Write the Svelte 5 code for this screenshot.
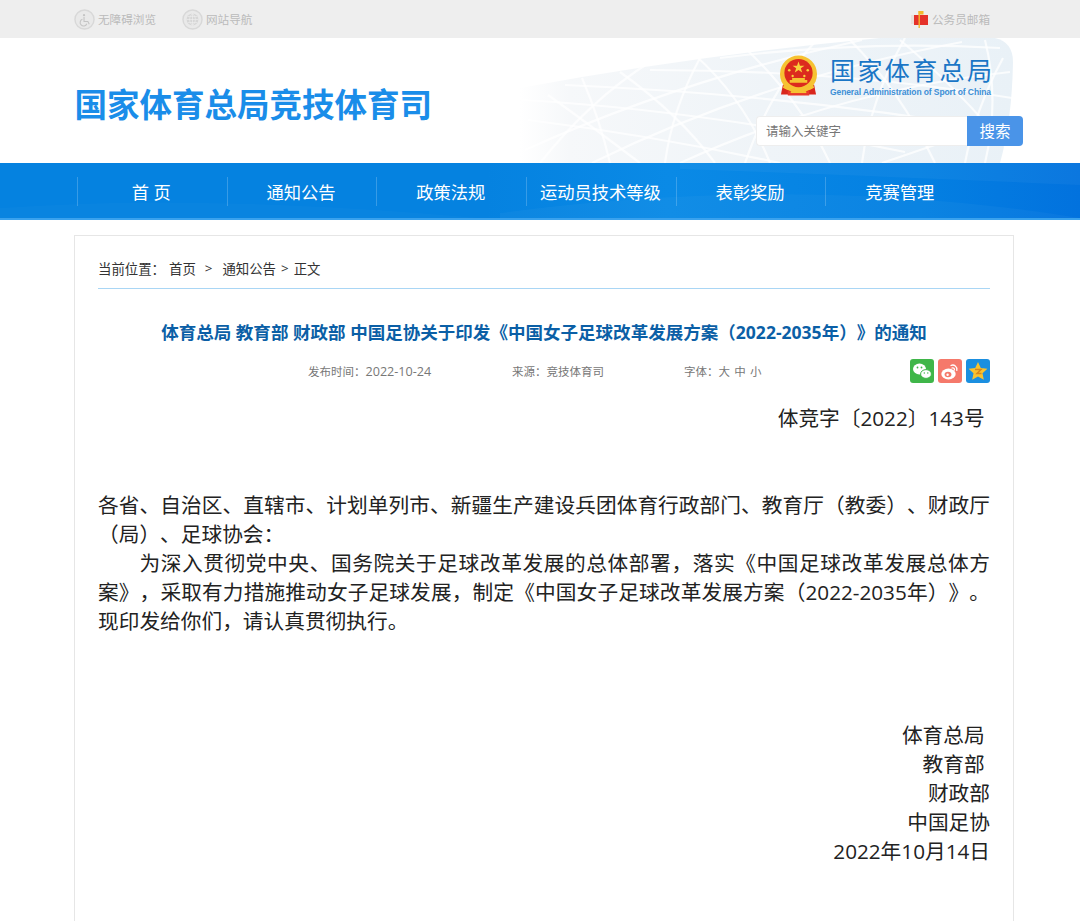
<script>
	const navItems = ['首 页', '通知公告', '政策法规', '运动员技术等级', '表彰奖励', '竞赛管理'];

	// strands of the stadium picture behind the logo
	const strands = [
		'M540 163 Q590 100 650 62', 'M610 163 Q600 120 582 78', 'M665 163 Q672 110 700 58',
		'M715 163 Q680 115 620 72', 'M770 163 Q745 100 695 55', 'M745 163 Q770 90 815 42',
		'M830 163 Q800 100 745 48', 'M862 163 Q870 100 905 38', 'M935 163 Q900 90 850 40',
		'M965 163 Q975 110 1003 58', 'M528 120 Q650 135 780 163', 'M522 100 Q700 110 905 152',
		'M565 85 Q800 95 1010 132', 'M650 70 Q840 70 1012 98', 'M720 58 Q860 40 1000 48',
		'M525 150 Q680 80 862 40', 'M592 163 Q760 80 962 42', 'M680 163 Q840 90 1010 72',
		'M882 163 Q950 140 1012 118', 'M548 95 Q590 125 640 163', 'M985 40 Q1000 100 985 163',
		'M900 40 Q960 90 1008 150'
	];
</script>

<div class="page">
	<div class="topbar">
		<div class="top-left">
			<a class="top-link">
				<svg class="round" viewBox="0 0 22 22">
					<circle cx="11" cy="11" r="10" fill="#e9e9e9" stroke="#d8d8d8" stroke-width="1.5" />
					<circle cx="10.5" cy="6.5" r="1.2" fill="#c4c4c4" />
					<path d="M10.5 8.5v4.5h4l1.5 3M8.8 10.8a3.6 3.6 0 1 0 4.6 4.6" fill="none" stroke="#c4c4c4" stroke-width="1.1" />
				</svg>
				无障碍浏览
			</a>
			<a class="top-link second">
				<svg class="round" viewBox="0 0 22 22">
					<circle cx="11" cy="11" r="10" fill="#e9e9e9" stroke="#d8d8d8" stroke-width="1.5" />
					<circle cx="11" cy="11" r="6.2" fill="#d6d6d6" />
					<path d="M4.8 11h12.4M11 4.8v12.4M6 7.8h10M6 14.2h10M11 4.8c-4 3.5-4 8.9 0 12.400M11 4.8c4 3.5 4 8.9 0 12.4" fill="none" stroke="#eee" stroke-width=".7" />
				</svg>
				网站导航
			</a>
		</div>
		<a class="top-link mail">
			<svg class="mailbox" viewBox="0 0 18 18">
				<path d="M0 4h5v9H0z" fill="#e9dfda" />
				<path d="M3 4h14v10H3z" fill="#e5322a" />
				<path d="M7.5 0h1.4v17H7.5z" fill="#f4b82c" />
				<path d="M7.5 0h5v3.5h-5z" fill="#f4b82c" />
			</svg>
			公务员邮箱
		</a>
	</div>

	<header class="header">
		<svg class="art" viewBox="520 38 495 125" width="495" height="125">
			<defs>
				<linearGradient id="fade" x1="0" x2="1" y1="0" y2="0">
					<stop offset="0" stop-color="#f6f8fa" stop-opacity="0" />
					<stop offset="0.1" stop-color="#f6f8fa" />
					<stop offset="0.5" stop-color="#eff4f8" />
					<stop offset="1" stop-color="#e9f1f7" />
				</linearGradient>
			</defs>
			<path d="M520 88 Q700 55 880 38 L995 38 Q1013 42 1013 62 Q1012 120 1000 163 L520 163 Z" fill="url(#fade)" />
			{#each strands as d}
				<path {d} stroke="#fff" stroke-width="2.2" fill="none" opacity="0.75" />
			{/each}
		</svg>
		<h1 class="site-title">国家体育总局竞技体育司</h1>
		<div class="brand">
			<div class="logo">
				<svg class="emblem" viewBox="0 0 40 42">
					<path d="M4 30 L2 40 H38 L36 30 Z" fill="#d9261c" />
					<circle cx="20" cy="19" r="19" fill="#f6c232" />
					<circle cx="20" cy="18" r="14.5" fill="#dc2a1e" />
					<path d="M20 6l1.5 4.4h4.6l-3.7 2.7 1.4 4.4-3.8-2.7-3.8 2.7 1.4-4.4-3.7-2.7h4.6z" fill="#f8d23c" />
					<circle cx="10.5" cy="15" r="1.3" fill="#f8d23c" />
					<circle cx="29.5" cy="15" r="1.3" fill="#f8d23c" />
					<circle cx="14" cy="21" r="1.2" fill="#f8d23c" />
					<circle cx="26" cy="21" r="1.2" fill="#f8d23c" />
					<path d="M11 28h18v-3h-2.5v-2h-13v2H11z" fill="#f6c232" />
					<path d="M5 30q15 9 30 0l1 3q-16 9-32 0z" fill="#f6c232" />
					<path d="M9 36q11 4 22 0v5H9z" fill="#e8392b" />
					<path d="M12 36.5h16v2H12z" fill="#f6c232" />
				</svg>
				<div class="logo-text">
					<div class="logo-cn">国家体育总局</div>
					<div class="logo-en">General Administration of Sport of China</div>
				</div>
			</div>
			<div class="search">
				<input class="search-input" placeholder="请输入关键字" />
				<button class="search-btn">搜索</button>
			</div>
		</div>
	</header>

	<nav class="nav">
		<svg class="waves" viewBox="0 0 1080 55" width="1080" height="55" preserveAspectRatio="none">
			<path d="M500 50 Q800 10 1080 55 H500 Z" fill="#fff" opacity="0.03" />
			<path d="M0 45 Q200 30 480 55 H0 Z" fill="#fff" opacity="0.02" />
			<path d="M680 6 Q900 14 1080 22 V0 H680 Z" fill="#fff" opacity="0.04" />
		</svg>
		<ul>
			{#each navItems as item}
				<li>{item}</li>
			{/each}
		</ul>
	</nav>

	<main class="card">
		<div class="crumbs">
			<span class="here">当前位置：</span>
			<span>首页</span>
			<span class="sep">&gt;</span>
			<span>通知公告</span>
			<span class="sep2">&gt;</span>
			<span>正文</span>
		</div>

		<h2 class="title">体育总局 教育部 财政部 中国足协关于印发《中国女子足球改革发展方案（2022-2035年）》的通知</h2>

		<div class="meta">
			<span class="m-date">发布时间：<span class="num">2022-10-24</span></span>
			<span class="m-src">来源：竞技体育司</span>
			<span class="m-size">字体：大 中 小</span>
			<div class="share">
				<svg viewBox="0 0 24 24">
					<rect width="24" height="24" rx="3" fill="#3fb649" />
					<ellipse cx="9.5" cy="10" rx="6.5" ry="5.4" fill="#fff" />
					<ellipse cx="16" cy="15" rx="5.4" ry="4.4" fill="#fff" stroke="#3fb649" />
					<circle cx="7.5" cy="8.5" r=".9" fill="#3fb649" />
					<circle cx="11.5" cy="8.5" r=".9" fill="#3fb649" />
					<circle cx="14.3" cy="14" r=".7" fill="#3fb649" />
					<circle cx="17.8" cy="14" r=".7" fill="#3fb649" />
				</svg>
				<svg viewBox="0 0 24 24">
					<rect width="24" height="24" rx="3" fill="#f5796b" />
					<ellipse cx="10.5" cy="15" rx="7.2" ry="5.4" fill="#fff" />
					<ellipse cx="10" cy="15.5" rx="3.4" ry="2.7" fill="#f5796b" />
					<circle cx="9.6" cy="15.8" r="1.2" fill="#fff" />
					<path d="M13 6.5c3-1.5 6.5 1 5.8 4.8M14 9c1.5-.6 2.7.4 2.4 1.9" fill="none" stroke="#fff" stroke-width="1.3" stroke-linecap="round" />
				</svg>
				<svg viewBox="0 0 24 24">
					<rect width="24" height="24" rx="3" fill="#1b8fe0" />
					<path d="M12 3l2.800 6 6.600.8-4.900 4.500 1.300 6.500-5.800-3.300-5.800 3.300 1.300-6.500-4.900-4.500 6.600-.8z" fill="#f9c22e" />
					<path d="M9 10.5h6l-4 4h4.5" fill="none" stroke="#d9861a" stroke-width="1.5" />
				</svg>
			</div>
		</div>

		<div class="content">
			<p class="right doc-no">体竞字〔2022〕143号&nbsp;</p>
			<p class="gap">&nbsp;</p>
			<p class="gap">&nbsp;</p>
			<p class="just">各省、自治区、直辖市、计划单列市、新疆生产建设兵团体育行政部门、教育厅（教委）、财政厅（局）、足球协会：</p>
			<p class="just indent">为深入贯彻党中央、国务院关于足球改革发展的总体部署，落实《中国足球改革发展总体方案》，采取有力措施推动女子足球发展，制定《中国女子足球改革发展方案（2022-2035年）》。现印发给你们，请认真贯彻执行。</p>
			<div class="sign">
				<p>体育总局&nbsp;</p>
				<p>教育部&nbsp;</p>
				<p>财政部</p>
				<p>中国足协</p>
				<p>2022年10月14日</p>
			</div>
		</div>
	</main>
</div>

<style>
	:global(body) {
		margin: 0;
		background: #fff;
	}
	.page {
		width: 1080px;
		height: 921px;
		overflow: hidden;
		font-family: "Open Sans", "Noto Sans CJK SC", sans-serif;
		text-spacing-trim: space-all;
	}
	.topbar {
		height: 38px;
		background: #eeeeee;
		display: flex;
		justify-content: space-between;
		align-items: center;
		padding: 0 90px 0 74px;
		box-sizing: border-box;
	}
	.top-left {
		display: flex;
	}
	.top-link {
		display: flex;
		align-items: center;
		font-size: 11.6px;
		color: #bbbbbb;
		gap: 3px;
	}
	.second {
		margin-left: 26px;
	}
	.round {
		width: 21px;
		height: 21px;
	}
	.mailbox {
		width: 18px;
		height: 18px;
		margin-top: 2px;
	}
	.header {
		position: relative;
		height: 125px;
		display: flex;
		justify-content: space-between;
		padding: 0 57px 0 74.5px;
	}
	.art {
		position: absolute;
		left: 520px;
		top: 0;
	}
	.site-title {
		position: relative;
		margin: 44px 0 0;
		font-size: 32.5px;
		line-height: 46px;
		font-weight: 700;
		color: #1a8de9;
	}
	.brand {
		position: relative;
		width: 267px;
		display: flex;
		flex-direction: column;
	}
	.logo {
		display: flex;
		margin: 17px 0 0 23px;
		height: 44px;
	}
	.emblem {
		width: 39px;
		height: 42px;
	}
	.logo-text {
		margin-left: 12px;
	}
	.logo-cn {
		font-size: 25px;
		line-height: 31px;
		letter-spacing: 2.4px;
		white-space: nowrap;
		color: #1a76c6;
	}
	.logo-en {
		font-family: "Liberation Sans", sans-serif;
		font-size: 8.5px;
		line-height: 12px;
		white-space: nowrap;
		color: #3d8fd6;
		font-weight: 700;
		letter-spacing: -0.1px;
	}
	.search {
		display: flex;
		margin-top: 17px;
		height: 30px;
	}
	.search-input {
		width: 211px;
		box-sizing: border-box;
		border: 1px solid #eeeeee;
		border-right: none;
		border-radius: 4px 0 0 4px;
		background: #fff;
		padding: 0 0 2px 9px;
		font: 12.5px "Noto Sans CJK SC", sans-serif;
		outline: none;
	}
	.search-input::placeholder {
		color: #777;
	}
	.search-btn {
		width: 56px;
		border: none;
		border-radius: 0 4px 4px 0;
		background: #4a94e8;
		color: #fff;
		font: 15.5px "Noto Sans CJK SC", sans-serif;
		padding: 0 0 2px;
	}
	.nav {
		position: relative;
		height: 57px;
		background: linear-gradient(90deg, #0582e0 0%, #0582e0 45%, #0a8ae6 62%, #0480e2 85%, #0272de 100%);
		border-bottom: 2px solid #3aa2ee;
		box-sizing: border-box;
	}
	.waves {
		position: absolute;
		left: 0;
		top: 0;
	}
	.nav ul {
		position: relative;
		display: flex;
		list-style: none;
		margin: 0;
		padding: 14px 0 0 77px;
	}
	.nav li {
		width: 149.7px;
		height: 29px;
		box-sizing: border-box;
		border-left: 1px solid rgba(255, 255, 255, 0.2);
		color: #fff;
		font-size: 17.3px;
		line-height: 31px;
		padding-right: 2px;
		text-align: center;
		white-space: nowrap;
	}
	.card {
		margin: 15px 0 0 74px;
		width: 940px;
		height: 760px;
		box-sizing: border-box;
		border: 1px solid #e6e6e6;
		padding: 0 23px;
	}
	.crumbs {
		height: 53px;
		border-bottom: 1px solid #a9d6f5;
		display: flex;
		align-items: center;
		padding-top: 11px;
		box-sizing: border-box;
		font-size: 13.4px;
		color: #333;
		white-space: nowrap;
	}
	.here {
		width: 71px;
	}
	.sep {
		margin: 0 10px 0 9px;
	}
	.sep2 {
		margin: 0 5px;
	}
	.title {
		margin: 29px 0 0;
		font-size: 17.55px;
		line-height: 28px;
		font-weight: 700;
		text-align: center;
		color: #0b5fa6;
		white-space: nowrap;
	}
	.meta {
		display: flex;
		align-items: center;
		margin-top: 12px;
		height: 26px;
		font-size: 11.5px;
		color: #777;
		white-space: nowrap;
	}
	.num {
		font-size: 12.6px;
	}
	.m-date {
		margin-left: 210px;
		width: 204px;
	}
	.m-src {
		width: 172px;
	}
	.m-size {
		word-spacing: 1.3px;
	}
	.share {
		display: flex;
		gap: 4px;
		margin-left: auto;
	}
	.share svg {
		width: 24px;
		height: 24px;
	}
	.content {
		margin-top: 20px;
		font-size: 20.7px;
		line-height: 29px;
		color: #222;
	}
	.content p {
		margin: 0;
	}
	.right {
		text-align: right;
	}
	.just {
		text-align: justify;
	}
	.indent {
		text-indent: 2em;
	}
	.sign {
		margin-top: 85px;
		text-align: right;
	}
</style>
